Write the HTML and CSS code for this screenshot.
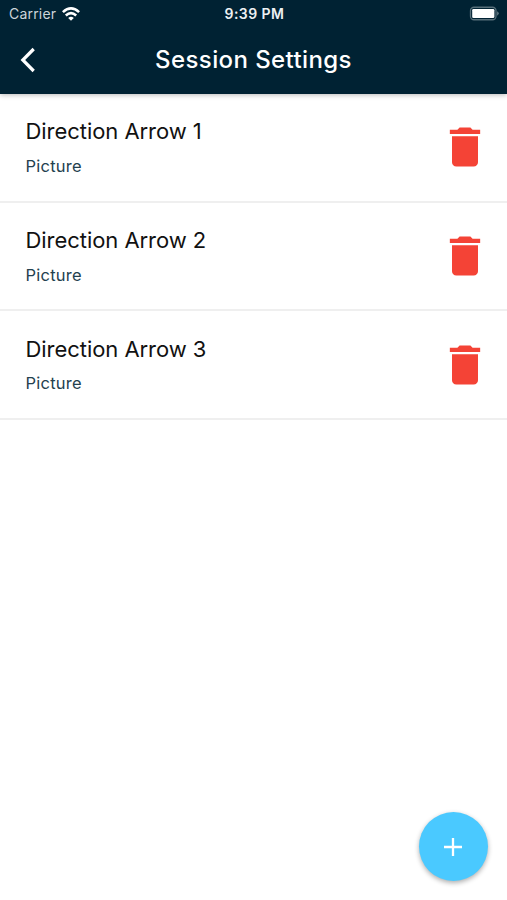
FILE: index.html
```html
<!DOCTYPE html>
<html lang="en">
<head>
<meta charset="utf-8">
<title>Session Settings</title>
<link rel="stylesheet" href="styles.css">
</head>
<body>
<svg class="symbols" aria-hidden="true">
  <symbol id="trash" viewBox="0 0 24 24"><path d="M6 19c0 1.100.9 2 2 2h8c1.100 0 2-.9 2-2V7H6v12zM19 4h-3.500l-1-1h-5l-1 1H5v2h14V4z"/></symbol>
</svg>
<div class="screen">
  <header class="header">
    <div class="status">
      <div class="carrier"><span>Carrier</span>
        <svg class="wifi" viewBox="0 0 18 14"><g fill="none" stroke="#fff" stroke-width="2.600"><path d="M.9 5.100Q9-2.300 17.100 5.100"/><path d="M3.800 8.500Q9 3.900 14.200 8.500"/></g><path fill="#fff" d="M6.200 10.900Q9 8.500 11.800 10.900L9 13.700z"/></svg>
      </div>
      <div class="clock">9:39 PM</div>
      <svg class="battery" viewBox="0 0 31 15"><rect x="1.500" y="1.250" width="25.500" height="12.500" rx="3.500" fill="none" stroke="#576f7a" stroke-width="1.300"/><rect x="3.200" y="3" width="22.200" height="9" rx="1.300" fill="#fff"/><path d="M28.200 5.300q3 2.200 0 4.400z" fill="#6c818b"/></svg>
    </div>
    <div class="navbar">
      <svg class="back" viewBox="0 0 16 26"><path d="M13.700 2L2.800 13 13.700 24" fill="none" stroke="#fff" stroke-width="3.200"/></svg>
      <h1 class="title">Session Settings</h1>
    </div>
  </header>
  <main class="list">
    <div class="row"><div><div class="name">Direction Arrow 1</div><div class="kind">Picture</div></div><svg class="trash"><use href="#trash"/></svg></div>
    <div class="row"><div><div class="name">Direction Arrow 2</div><div class="kind">Picture</div></div><svg class="trash"><use href="#trash"/></svg></div>
    <div class="row"><div><div class="name">Direction Arrow 3</div><div class="kind">Picture</div></div><svg class="trash"><use href="#trash"/></svg></div>
  </main>
  <button class="fab" aria-label="Add"><svg viewBox="0 0 18 18"><path d="M9 0v18M0 9h18" stroke="#fff" stroke-width="2.300"/></svg></button>
</div>
</body>
</html>
```
FILE: styles.css
```css
* { box-sizing: border-box; }
body { margin: 0; background: #fff; font-family: Inter, "Liberation Sans", sans-serif; }
.symbols { display: none; }
.screen { position: relative; width: 507px; height: 900px; overflow: hidden; background: #fff; }
.header { height: 94px; background: #002233; color: #fff; box-shadow: 0 1px 5px rgba(0, 0, 0, .28); }
.status { display: grid; grid-template-columns: 1fr auto 1fr; align-items: center; height: 27px; padding: 0 7px 0 9px; }
.carrier { display: flex; align-items: center; gap: 6px; font-size: 14px; letter-spacing: .2px; color: #ccd5da; }
.wifi { width: 18px; height: 14px; }
.clock { font-size: 14px; font-weight: 600; letter-spacing: .45px; color: #edf1f3; }
.battery { width: 31px; height: 15px; justify-self: end; }
.navbar { display: grid; grid-template-columns: 60px 1fr 60px; align-items: center; height: 66px; }
.back { width: 16px; height: 26px; margin-left: 20px; }
.title { margin: 0; text-align: center; font-size: 24px; line-height: 30px; font-weight: 500; letter-spacing: .4px; white-space: nowrap; }
.row { display: flex; justify-content: space-between; height: 108.700px; padding: 22.300px 16px 0 25.500px; border-bottom: 2px solid #efefef; }
.name { font-size: 22px; line-height: 30px; letter-spacing: -.05px; color: #111; }
.kind { margin-top: 8.700px; font-size: 16.500px; line-height: 22px; letter-spacing: .25px; color: #24414f; }
.trash { width: 52px; height: 52px; margin-top: 5.200px; fill: #f44336; }
.fab { position: absolute; right: 19.500px; bottom: 19px; width: 69px; height: 69px; display: grid; place-items: center; padding: 0; border: 0; border-radius: 50%; background: #4ac9ff; box-shadow: 0 2px 5px rgba(0, 0, 0, .32); }
.fab svg { width: 18px; height: 18px; }
```
